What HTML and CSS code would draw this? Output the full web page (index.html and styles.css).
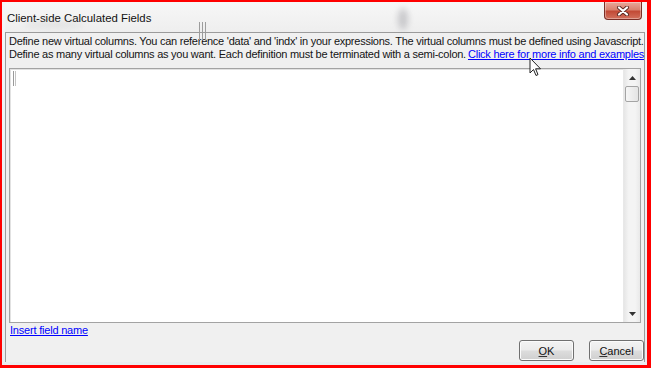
FILE: index.html
```html
<!DOCTYPE html>
<html lang="en">
<head>
  <meta charset="UTF-8" />
  <title>Client-side Calculated Fields</title>
  <link rel="stylesheet" href="styles.css">
</head>
<body>

  <div class="shot">
    <div class="window">

      <div class="titlebar">
        <span class="title">Client-side Calculated Fields</span>
        <button class="close" title="Close">
          <svg width="14" height="10" viewBox="0 0 14 10">
            <path d="M3 1.5 L11 8.5 M11 1.5 L3 8.5" stroke="#5a2a22" stroke-width="4" stroke-linecap="round"/>
            <path d="M3 1.5 L11 8.5 M11 1.5 L3 8.5" stroke="#ffffff" stroke-width="2.2" stroke-linecap="round"/>
          </svg>
        </button>
      </div>

      <div class="client">
        <p class="hint">Define new virtual columns. You can reference 'data' and 'indx' in your expressions. The virtual columns must be defined using Javascript.</p>
        <p class="hint hint-row">
          <span>Define as many virtual columns as you want. Each definition must be terminated with a semi-colon.</span>
          <a href="#">Click here for more info and examples</a>
        </p>

        <div class="editor">
          <div class="editor-text"><span class="caret"></span></div>
          <div class="vscroll">
            <div class="sb-btn">
              <svg width="7" height="4" viewBox="0 0 7 4"><path d="M0 4 L3.5 0 L7 4 Z" fill="#333"/></svg>
            </div>
            <div class="sb-thumb"></div>
            <div class="sb-track"></div>
            <div class="sb-btn">
              <svg width="7" height="4" viewBox="0 0 7 4"><path d="M0 0 L7 0 L3.5 4 Z" fill="#333"/></svg>
            </div>
          </div>
        </div>

        <a href="#" class="insert">Insert field name</a>

        <div class="actions">
          <button class="btn btn-ok"><u>O</u>K</button>
          <button class="btn btn-cancel"><u>C</u>ancel</button>
        </div>
      </div>

      <!-- glass smudges and the mouse pointer from the capture -->
      <div class="smudge smudge-a"></div>
      <div class="smudge smudge-b"></div>
      <div class="ticks"><i></i><i></i><i></i></div>
      <svg class="pointer" width="14" height="22" viewBox="0 0 14 22">
        <path d="M1 1 L1 16 L4.5 12.5 L7 18.5 L9 17.6 L6.6 11.8 L11.5 11.8 Z" fill="#fff" stroke="#222" stroke-width="1" stroke-linejoin="round"/>
      </svg>
    </div>
  </div>

</body>
</html>
```

FILE: styles.css
```css
* { box-sizing: border-box; }

body {
  margin: 0;
  font-family: 'Liberation Sans', Arial, sans-serif;
  background: #ffffff;
}

.shot {
  width: 651px;
  height: 368px;
  border: solid #ff0000;
  border-width: 2px 4px 3px 2px;
}

.window {
  position: relative;
  height: 100%;
  display: flex;
  flex-direction: column;
  padding: 0 2px 3px 3px;
  background: linear-gradient(#f3f5f7, #e9ecef);
}

/* title bar */

.titlebar {
  height: 30px;
  display: flex;
  align-items: flex-start;
  background: linear-gradient(#f7f7f7, #eeeeee);
}

.title {
  margin-top: 10px;
  margin-left: 2px;
  font-size: 11.4px;
  color: #111;
}

.close {
  margin-left: auto;
  margin-right: 3px;
  width: 38px;
  height: 18px;
  padding: 0;
  border: 1px solid #7a2e26;
  border-top: none;
  border-radius: 0 0 4px 4px;
  background: linear-gradient(#e9a99b 0%, #d9826f 45%, #c24a36 55%, #d2705c 100%);
  box-shadow: inset 0 0 0 1px rgba(255, 255, 255, 0.35);
  display: flex;
  align-items: center;
  justify-content: center;
}

/* dialog body */

.client {
  flex: 1;
  display: flex;
  flex-direction: column;
  padding: 2px 0 0 3px;
  background: #f0f0f0;
  border: 1px solid #9b9b9b;
  border-bottom: none;
  font-size: 11px;
  color: #141414;
}

.hint {
  margin: 0;
  height: 13px;
  line-height: 13px;
  white-space: nowrap;
  letter-spacing: -0.25px;
}

.hint-row {
  display: flex;
  justify-content: space-between;
}

.hint a,
.insert {
  color: #0000ff;
  text-decoration: underline;
}

.editor {
  margin: 7px 3px 0 0;
  height: 255px;
  display: flex;
  background: #ffffff;
  border: 1px solid #a3a3a3;
  box-shadow: inset 1px 1px 0 #e2e2e2;
}

.editor-text {
  flex: 1;
  padding: 2px 3px;
}

.caret {
  display: block;
  width: 3px;
  height: 15px;
  border-left: 1px solid #9a9a9a;
  border-right: 1px solid #c4c4c4;
}

.vscroll {
  width: 17px;
  display: flex;
  flex-direction: column;
  background: linear-gradient(90deg, #e6e6e6, #f4f4f4 30%, #f4f4f4 70%, #e9e9e9);
  border-left: 1px solid #e8e8e8;
}

.sb-btn {
  height: 17px;
  display: flex;
  align-items: center;
  justify-content: center;
}

.sb-thumb {
  height: 16px;
  margin: 0 1px;
  border: 1px solid #a4a4a4;
  border-radius: 2px;
  background: linear-gradient(90deg, #f6f6f6, #e4e4e4);
}

.sb-track {
  flex: 1;
}

.insert {
  margin: 1px 0 0 1px;
  line-height: 13px;
  align-self: flex-start;
  letter-spacing: -0.2px;
}

.actions {
  margin-top: 3px;
  display: flex;
  justify-content: flex-end;
  gap: 15px;
}

.btn {
  width: 55px;
  height: 21px;
  padding: 0;
  font-family: inherit;
  font-size: 11px;
  color: #111;
  border: 1px solid #707070;
  border-radius: 3px;
  background: linear-gradient(#f3f3f3 0%, #ebebeb 48%, #dddddd 52%, #cfcfcf 100%);
  box-shadow: inset 0 0 0 1px #fbfbfb;
}

.btn u {
  text-decoration-color: #333;
}

/* capture artefacts */

.smudge {
  position: absolute;
  border-radius: 50%;
  filter: blur(3px);
  background: rgba(120, 120, 130, 0.35);
}

.smudge-a {
  left: 396px;
  top: 6px;
  width: 10px;
  height: 22px;
}

.smudge-b {
  left: 22px;
  top: 20px;
  width: 60px;
  height: 5px;
  background: rgba(150, 150, 150, 0.2);
}

.ticks {
  position: absolute;
  left: 197px;
  top: 20px;
  display: flex;
  gap: 2px;
}

.ticks i {
  width: 1px;
  height: 18px;
  background: #9c9c9c;
}

.pointer {
  position: absolute;
  left: 527px;
  top: 55px;
}
```
